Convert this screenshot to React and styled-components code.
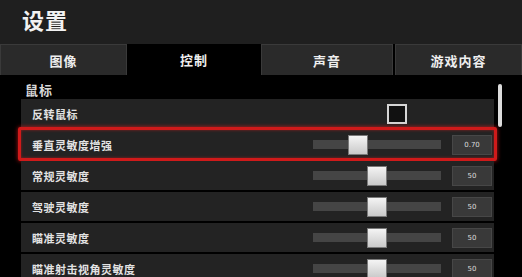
import React from "react";
import styled, { createGlobalStyle } from "styled-components";

const Global = createGlobalStyle`
  html, body { margin: 0; padding: 0; background: #000; overflow: hidden; }
  body { font-family: "Noto Sans CJK SC", "Noto Sans", sans-serif; color: #e6e6e6; }
  * { box-sizing: border-box; }
`;

const Page = styled.div`
  width: 522px;
  height: 277px;
  overflow: hidden;
  background: #000;
`;

const Header = styled.header`
  height: 44px;
  background: #1f1f1f;
  display: flex;
  align-items: center;
  padding-left: 22px;
  padding-bottom: 6px;
`;

const Title = styled.h1`
  margin: 0;
  font-size: 22px;
  font-weight: 700;
  color: #f2f2f2;
  letter-spacing: 1px;
  line-height: 1;
`;

const Tabs = styled.nav`
  display: grid;
  grid-template-columns: 127px 134px 134px 1fr;
  height: 31px;
  background: #000;
`;

const Tab = styled.div`
  display: flex;
  align-items: center;
  justify-content: center;
  font-size: 13px;
  font-weight: 700;
  color: #eeeeee;
  background: ${(p) => (p.$active ? "#000" : "#2a2a2a")};
  border: ${(p) => (p.$active ? "none" : "1px solid #3a3a3a")};
  border-bottom: none;
  margin-right: ${(p) => (p.$gap ? "2px" : "0")};
  letter-spacing: 1px;
`;

const Body = styled.div`
  display: flex;
  padding-left: 21px;
`;

const List = styled.div`
  width: 473px;
  display: flex;
  flex-direction: column;
`;

const Section = styled.div`
  height: 24px;
  padding-left: 4px;
  padding-top: 8px;
  font-size: 13px;
  font-weight: 700;
  line-height: 14px;
  color: #d8d8d8;
  letter-spacing: 1px;
`;

const Rows = styled.div`
  display: flex;
  flex-direction: column;
  gap: 2px;
`;

const Row = styled.div`
  position: relative;
  height: 29px;
  flex: none;
  display: flex;
  align-items: center;
  background: #232323;
  padding-right: 2px;
  ${(p) =>
    p.$highlight &&
    `
    &::after {
      content: "";
      position: absolute;
      inset: -3px -3px -2px -3px;
      border: 3px solid #cf1a1a;
      border-radius: 2px;
      box-shadow: 0 0 4px rgba(255, 30, 30, 0.7), inset 0 0 3px rgba(255, 30, 30, 0.5);
      pointer-events: none;
    }
  `}
`;

const Label = styled.div`
  flex: 1;
  padding-left: 11px;
  font-size: 11px;
  font-weight: 700;
  color: #e2e2e2;
  letter-spacing: 0.5px;
`;

const Control = styled.div`
  width: 179px;
  display: flex;
  align-items: center;
  gap: 11px;
`;

const Checkbox = styled.div`
  width: 20px;
  height: 20px;
  margin-left: 74px;
  border: 2px solid #d6d6d6;
  background: #111;
`;

const Track = styled.div`
  position: relative;
  width: 128px;
  height: 9px;
  background: #454545;
`;

const Thumb = styled.div`
  position: absolute;
  top: 50%;
  width: 20px;
  height: 20px;
  transform: translateY(-50%);
  background: linear-gradient(#f4f4f4, #c9c9c9);
  border: 1px solid #7a7a7a;
`;

const Value = styled.div`
  width: 40px;
  height: 20px;
  display: flex;
  align-items: center;
  justify-content: center;
  background: #393939;
  border: 1px solid #474747;
  font-family: "DejaVu Sans", sans-serif;
  font-size: 7px;
  color: #dcdcdc;
`;

const ScrollCol = styled.div`
  margin-left: 4px;
  padding-top: 9px;
`;

const ScrollThumb = styled.div`
  width: 4px;
  height: 43px;
  background: #dcdcdc;
  border-radius: 2px;
`;

const Slider = ({ pos }) => (
  <Track>
    <Thumb style={{ left: `${pos * 108}px` }} />
  </Track>
);

const rows = [
  { label: "垂直灵敏度增强", value: "0.70", pos: 0.324, highlight: true },
  { label: "常规灵敏度", value: "50", pos: 0.5 },
  { label: "驾驶灵敏度", value: "50", pos: 0.5 },
  { label: "瞄准灵敏度", value: "50", pos: 0.5 },
  { label: "瞄准射击视角灵敏度", value: "50", pos: 0.5 },
];

export default function App() {
  return (
    <Page>
      <Global />
      <Header>
        <Title>设置</Title>
      </Header>
      <Tabs>
        <Tab>图像</Tab>
        <Tab $active>控制</Tab>
        <Tab $gap>声音</Tab>
        <Tab>游戏内容</Tab>
      </Tabs>
      <Body>
        <List>
          <Section>鼠标</Section>
          <Rows>
            <Row>
              <Label>反转鼠标</Label>
              <Control>
                <Checkbox />
              </Control>
            </Row>
            {rows.map((r) => (
              <Row key={r.label} $highlight={r.highlight}>
                <Label>{r.label}</Label>
                <Control>
                  <Slider pos={r.pos} />
                  <Value>{r.value}</Value>
                </Control>
              </Row>
            ))}
          </Rows>
        </List>
        <ScrollCol>
          <ScrollThumb />
        </ScrollCol>
      </Body>
    </Page>
  );
}
